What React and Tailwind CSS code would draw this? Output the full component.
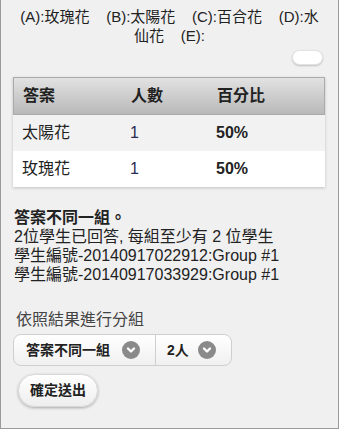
const rows = [
  { name: '太陽花', count: 1, pct: '50%' },
  { name: '玫瑰花', count: 1, pct: '50%' },
];

function Chevron() {
  return (
    <span className="flex h-[18px] w-[18px] items-center justify-center rounded-full bg-[#8a8a8a]">
      <svg width="10" height="10" viewBox="0 0 10 10">
        <path d="M2 3.5 L5 6.5 L8 3.5" stroke="#fff" strokeWidth="2.4" fill="none" strokeLinecap="round" strokeLinejoin="round" />
      </svg>
    </span>
  );
}

export default function App() {
  return (
    <div className="w-[339px] h-[429px] border-x border-b border-[#9a9a9a] bg-[#f0f0f0] font-['Liberation_Sans','Noto_Sans_CJK_TC',sans-serif] text-[#222]">
      <div className="px-[12px] pt-[7px] text-center text-[15px] leading-[19px]">
        (A):玫瑰花&nbsp;&nbsp;&nbsp; (B):太陽花&nbsp;&nbsp;&nbsp; (C):百合花&nbsp;&nbsp;&nbsp; (D):水仙花&nbsp;&nbsp;&nbsp; (E):
      </div>
      <div className="flex justify-end pr-[15px] pt-[5px]">
        <div className="h-[15px] w-[31px] rounded-full bg-white border border-[#e2e2e2] shadow-[0_1px_2px_rgba(0,0,0,0.2)]" />
      </div>

      <div className="mx-[12px] mt-[12px] w-[312px] shadow-[0_1px_3px_rgba(0,0,0,0.2)]">
        <div className="flex h-[38px] items-center border border-[#aaa] bg-gradient-to-b from-[#e2e2e2] to-[#b9b9b9] text-[16px] font-bold">
          <div className="w-[110px] pl-[9px]">答案</div>
          <div className="w-[84px] pl-[7px]">人數</div>
          <div className="pl-[9px]">百分比</div>
        </div>
        {rows.map((r, i) => (
          <div key={r.name} className={'flex h-[36px] items-center text-[16px] ' + (i === 0 ? 'bg-[#f2f2f2]' : 'bg-white')}>
            <div className="w-[110px] pl-[9px]">{r.name}</div>
            <div className="w-[84px] pl-[7px] text-[#2a2a55]">{r.count}</div>
            <div className="pl-[9px] font-bold">{r.pct}</div>
          </div>
        ))}
      </div>

      <div className="px-[13px] pt-[21px] text-[16px] leading-[19px]">
        <div className="font-bold">答案不同一組。</div>
        <div>2位學生已回答, 每組至少有 2 位學生</div>
        <div>學生編號-20140917022912:Group #1</div>
        <div>學生編號-20140917033929:Group #1</div>
      </div>

      <div className="px-[15px] pt-[27px] text-[16px] leading-[18px] text-[#444]">依照結果進行分組</div>

      <div className="mx-[12px] mt-[5px] flex h-[32px] w-[219px] items-center rounded-[8px] border border-[#cfcfcf] bg-gradient-to-b from-white to-[#f0f0f0] text-[14px] font-bold">
        <div className="flex h-full w-[142px] items-center justify-between border-r border-[#cfcfcf] pl-[12px] pr-[15px]">
          <span>答案不同一組</span>
          <Chevron />
        </div>
        <div className="flex h-full flex-1 items-center justify-between pl-[11px] pr-[15px]">
          <span>2人</span>
          <Chevron />
        </div>
      </div>

      <button className="ml-[17px] mt-[8px] flex h-[33px] w-[80px] items-center justify-center rounded-full border border-[#d8d8d8] bg-gradient-to-b from-white to-[#eeeeee] text-[14px] font-bold text-[#222] shadow-[0_1px_3px_rgba(0,0,0,0.3)]">
        確定送出
      </button>
    </div>
  );
}
